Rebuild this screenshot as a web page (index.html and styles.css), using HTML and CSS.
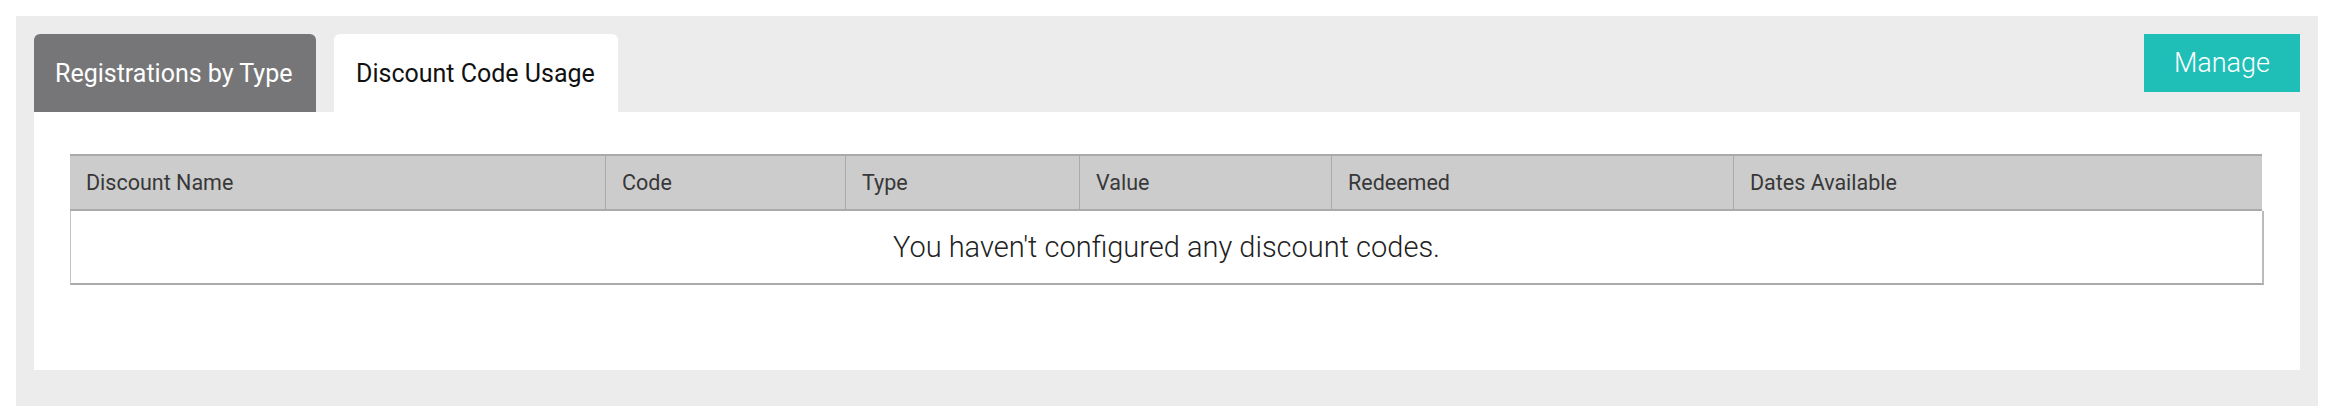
FILE: index.html
```html
<!DOCTYPE html>
<html>
<head>
<meta charset="utf-8">
<link rel="stylesheet" href="styles.css">
</head>
<body>
<div class="wrap">
  <div class="topbar">
    <div class="tabs">
      <div class="tab tab-inactive">Registrations by Type</div>
      <div class="tab tab-active">Discount Code Usage</div>
    </div>
    <button class="manage">Manage</button>
  </div>
  <div class="panel">
    <div class="table">
      <div class="thead">
        <div class="th c1">Discount Name</div>
        <div class="th c2">Code</div>
        <div class="th c3">Type</div>
        <div class="th c4">Value</div>
        <div class="th c5">Redeemed</div>
        <div class="th c6">Dates Available</div>
      </div>
      <div class="tbody">You haven't configured any discount codes.</div>
    </div>
  </div>
</div>
</body>
</html>
```

FILE: styles.css
```css
html, body {
  margin: 0;
  padding: 0;
  background: #ffffff;
  font-family: Roboto, "Liberation Sans", sans-serif;
}
.wrap {
  margin: 16px 24px 0 16px;
  background: #ececec;
  padding: 18px 18px 36px 18px;
}
.topbar {
  display: flex;
  justify-content: space-between;
  align-items: flex-start;
}
.tabs {
  display: flex;
  gap: 18px;
}
.tab {
  height: 78px;
  display: flex;
  align-items: center;
  padding: 0 21px 0 21px;
  font-size: 25px;
  border-radius: 6px 6px 0 0;
  box-sizing: border-box;
  white-space: nowrap;
}
.tab-inactive {
  background: #767678;
  color: #ffffff;
  width: 282px;
}
.tab-active {
  background: #ffffff;
  color: #111111;
  width: 284px;
  padding-left: 22px;
}
.manage {
  width: 156px;
  height: 58px;
  border: 0;
  background: #1fbfb7;
  color: #ffffff;
  font-family: Roboto, "Liberation Sans", sans-serif;
  font-weight: 300;
  font-size: 27px;
  padding: 0;
  margin: 0;
}
.panel {
  background: #ffffff;
  padding: 42px 36px 85px 36px;
}
.thead {
  display: grid;
  grid-template-columns: 535px 240px 234px 252px 402px 1fr;
  background: #cccccc;
  border-top: 2px solid #aaaaaa;
  border-bottom: 2px solid #aaaaaa;
  margin-right: 2px;
}
.th {
  height: 53px;
  display: flex;
  align-items: center;
  padding-left: 16px;
  font-size: 21.5px;
  color: #383838;
  border-left: 1px solid #aaaaaa;
}
.th.c1 {
  border-left: 0;
}
.tbody {
  height: 72px;
  display: flex;
  align-items: center;
  justify-content: center;
  border-left: 1px solid #c4c4c4;
  border-right: 2px solid #bbbbbb;
  border-bottom: 2px solid #aaaaaa;
  font-size: 29px;
  font-weight: 300;
  color: #222222;
}
```
